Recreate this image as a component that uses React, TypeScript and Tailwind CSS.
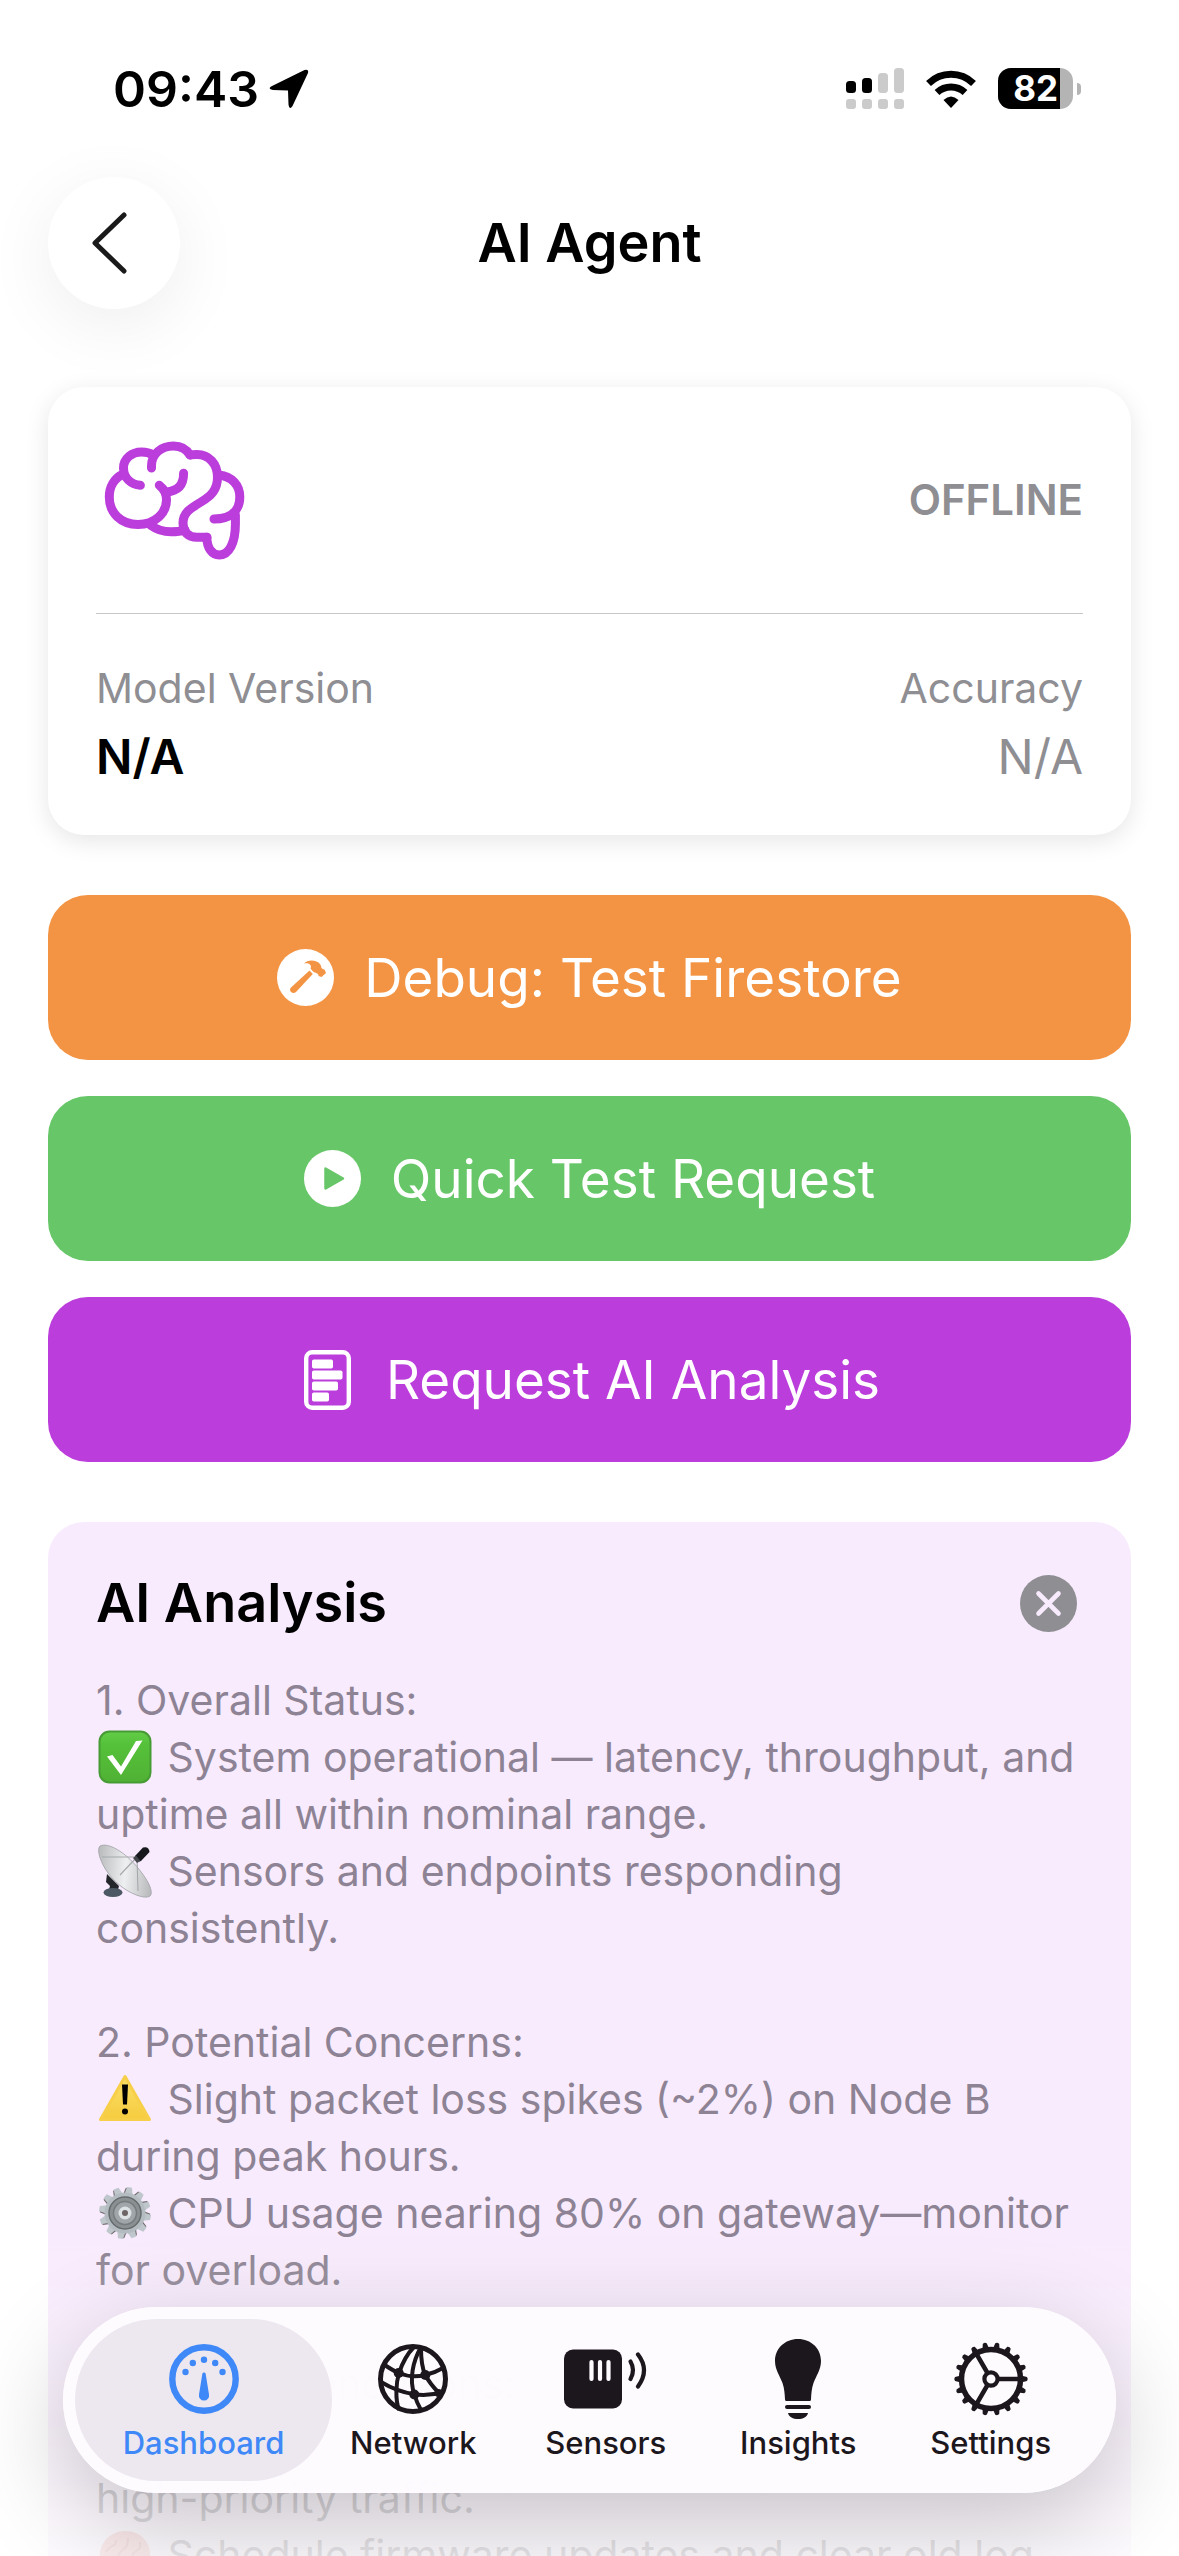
import { useState, type ReactNode } from 'react'
import clsx from 'clsx'

function BrainIcon() {
  return (
    <svg width="144" height="124" viewBox="0 -2 144 124" fill="none" stroke="#bb3ddb" strokeWidth="9" strokeLinecap="round" strokeLinejoin="round" aria-hidden="true">
      <path d="M21.6 34C12 38 7.3 47 7.3 57C7.3 73 19 84.5 36 84.5C53 84.5 64.5 73 64.5 60C64.5 53 62 49 57.3 45.3" />
      <path d="M38.4 45.3C29 44.5 21.5 38 21.5 28C21.5 18.5 30 12 39.5 12C44 12 48 13 51 15" />
      <path d="M49.5 28V26C49.5 14 59 6 71.5 6C79 6 84.5 9 88 15" />
      <path d="M81.6 33.3C81.6 45 76 51 64.5 52" />
      <path d="M88 15C90 14.5 92 14.5 95 14.5C107 14.5 115.5 24 115.5 37C115.5 50 109 56 99 62C88 68.5 81 73 81 83C81 92 86 97.3 95 97.3H105" />
      <path d="M49 85.5C55 90 62 91.8 69 91.8C74 91.8 79 91.3 83 90" />
      <path d="M117 35C130 36.5 137.8 45 137.8 57C137.8 71 128 79 112 79" />
      <path d="M133.4 75V84C133.4 103 127 115 117.3 115C110 115 105 108 104.8 97.3" />
    </svg>
  )
}

function HammerIcon() {
  return (
    <svg width="57" height="57" viewBox="0 0 57 57" aria-hidden="true">
      <circle cx="28.5" cy="28.5" r="28.5" fill="#fff" />
      <g fill="#f39444">
        <path d="M32.5 21.5L35.8 25L19 43Q16.5 45 14 43Q12 40.5 14 38.5Z" />
        <path d="M27 14.5C31 10 40 11 43 15C45 18 43.5 20 47.5 20.5L49 24L44.5 28L41.5 27C42 24 38 24 36 22.5L33.5 19.5C35.5 15.5 31 13.5 27 14.5Z" />
      </g>
    </svg>
  )
}

function PlayIcon() {
  return (
    <svg width="57" height="57" viewBox="0 0 57 57" aria-hidden="true">
      <circle cx="28.5" cy="28.5" r="28.5" fill="#fff" />
      <path d="M21.5 18.5L39 28.5L21.5 38.5Z" fill="#67c668" stroke="#67c668" strokeWidth="2.5" strokeLinejoin="round" />
    </svg>
  )
}

function ReportIcon() {
  return (
    <svg width="57" height="60" viewBox="0 0 57 60" fill="#fff" aria-hidden="true">
      <rect x="7.2" y="2.2" width="42.6" height="55.6" rx="6" fill="none" stroke="#fff" strokeWidth="4.4" />
      <rect x="13" y="9.5" width="21" height="9" rx="1.8" />
      <rect x="13" y="20.5" width="30.5" height="9" rx="1.8" />
      <rect x="13" y="31.5" width="26" height="9" rx="1.8" />
      <rect x="13" y="42.5" width="17" height="9" rx="1.8" />
    </svg>
  )
}

function GaugeIcon() {
  return (
    <svg width="72" height="72" viewBox="-36 -36 72 72" fill="currentColor" aria-hidden="true">
      <circle r="31.7" fill="none" stroke="currentColor" strokeWidth="6.4" />
      <circle cx="-18.5" cy="-7" r="3.2" />
      <circle cx="-11.2" cy="-16" r="3.2" />
      <circle cx="0" cy="-19.3" r="3.2" />
      <circle cx="11.2" cy="-16" r="3.2" />
      <circle cx="18.5" cy="-7" r="3.2" />
      <path d="M-1.7 -5C-1.5 -7 1.5 -7 1.7 -5L5 15.5A5.1 5.1 0 1 1 -5 15.5Z" />
    </svg>
  )
}

function GlobeIcon() {
  return (
    <svg width="72" height="72" viewBox="-36 -36 72 72" fill="none" stroke="currentColor" strokeWidth="4" aria-hidden="true">
      <circle r="32.5" strokeWidth="5" />
      <path d="M-29 -14.5C-24 -11 -19 -8 -14 -6C-5 -2 4 -2 12.3 -4C19 -5.5 25 -8 31 -11.5" />
      <path d="M1 -32C-6 -25 -11 -15 -14 -6C-17 4 -18 20 -14 31" />
      <path d="M8 -32C0 -18 -4 0 1.3 15.3C3 21 5 26 8 31" />
      <path d="M8 -31C8 -20 9 -11 12.3 -4C16 3 21 9 26 14" />
      <path d="M-32 3C-22 9 -10 13.5 1.3 15.3C10 16.5 20 16 30 13" />
      <g fill="currentColor" stroke="none">
        <circle cx="-14.3" cy="-6" r="5" />
        <circle cx="12.3" cy="-4" r="5" />
        <circle cx="1.3" cy="15.5" r="5" />
        <circle cx="25.5" cy="14" r="4" />
      </g>
    </svg>
  )
}

function SensorIcon() {
  return (
    <svg width="84" height="60" viewBox="0 0 84 60" fill="none" stroke="currentColor" strokeLinecap="round" aria-hidden="true">
      <rect x="0" y="0.5" width="58" height="59" rx="9" fill="currentColor" stroke="none" />
      <path d="M27.5 13V30M36 13V30M44.5 13V30" stroke="#fefbff" strokeWidth="4.2" />
      <path d="M66.5 12.5Q71.5 21 66.5 30" strokeWidth="4.2" />
      <path d="M74 5.5Q86 21 74 37.5" strokeWidth="4.2" />
    </svg>
  )
}

function BulbIcon() {
  return (
    <svg width="46" height="80" viewBox="0 0 46 80" fill="currentColor" aria-hidden="true">
      <path d="M23 0C36 0 46 9.5 46 22C46 31 41 37 38.5 44C36.5 50 36.3 55 36 60.5Q36 62 34.5 62H11.5Q10 62 10 60.5C9.7 55 9.5 50 7.5 44C5 37 0 31 0 22C0 9.5 10 0 23 0Z" />
      <rect x="10" y="66" width="26" height="4" rx="2" />
      <path d="M13 74H33C32 78 28 80 23 80C18 80 14 78 13 74Z" />
    </svg>
  )
}

const teeth = Array.from({ length: 18 }, (_, i) => i * 20)

function CogIcon() {
  return (
    <svg width="76" height="76" viewBox="-38 -38 76 76" fill="none" stroke="currentColor" aria-hidden="true">
      <circle r="29.5" strokeWidth="5.5" />
      <circle r="6.6" strokeWidth="4.2" />
      {teeth.map((a) => (
        <path key={a} d="M30 -3.4L36 -2Q37.5 0 36 2L30 3.4Z" fill="currentColor" stroke="none" transform={`rotate(${a})`} />
      ))}
      <path d="M8 0H28M-4 -6.9L-14 -24.2M-4 6.9L-14 24.2" strokeWidth="4.6" />
    </svg>
  )
}

// Inline pictographs sit on the text line and wrap with it.
function Glyph({ label, children }: { label: string; children: ReactNode }) {
  return (
    <svg role="img" aria-label={label} viewBox="0 0 54 54" className="-mt-2 mr-1 ml-0.5 inline-block h-[54px] w-[54px] align-middle">
      {children}
    </svg>
  )
}

function CheckGlyph() {
  return (
    <Glyph label="Check">
      <defs>
        <linearGradient id="check-fill" x1="0" y1="0" x2="0" y2="1">
          <stop offset="0" stopColor="#63cc48" />
          <stop offset="0.25" stopColor="#55c13a" />
          <stop offset="1" stopColor="#50b134" />
        </linearGradient>
      </defs>
      <rect x="1.5" y="1.5" width="51" height="51" rx="10" fill="url(#check-fill)" stroke="#479b35" strokeWidth="2" />
      <path d="M9 26.5L14.5 25L23 36.5L38 11L44.5 10.5L23 45Z" fill="#fff" />
    </Glyph>
  )
}

function DishGlyph() {
  return (
    <Glyph label="Satellite dish">
      <defs>
        <linearGradient id="dish-fill" x1="0" y1="0.5" x2="1" y2="0.6">
          <stop offset="0" stopColor="#bcbec0" />
          <stop offset="0.5" stopColor="#eeeff0" />
          <stop offset="1" stopColor="#b9bbbd" />
        </linearGradient>
      </defs>
      <path d="M9 30L21 42L19 49H10L12 42L8 38Z" fill="#23262a" />
      <ellipse cx="15" cy="48.5" rx="9.5" ry="4.5" fill="#4c5964" />
      <path d="M2 2C10 -2 27 8 40 24C50 36 56 48 52 52C47 56 28 49 15 35C3 22 -2 6 2 2Z" fill="url(#dish-fill)" stroke="#9da0a3" strokeWidth="0.8" />
      <path d="M4 13L39 13L40 47M39 13L22 31" fill="none" stroke="#a6a9ac" strokeWidth="1.1" />
      <path d="M37 12L45 3.5Q51 2 51.5 8L43 17Q38 19 37 12Z" fill="#17191c" />
      <path d="M35 14L38 11.5L42.5 17L39 19Z" fill="#44484d" />
    </Glyph>
  )
}

function WarningGlyph() {
  return (
    <Glyph label="Warning">
      <defs>
        <linearGradient id="warn-fill" x1="0" y1="0" x2="0" y2="1">
          <stop offset="0" stopColor="#fbe06a" />
          <stop offset="1" stopColor="#f6cb3e" />
        </linearGradient>
      </defs>
      <path d="M27 4.5L51.5 47.5H2.5Z" fill="url(#warn-fill)" stroke="#f7cf49" strokeWidth="3" strokeLinejoin="round" />
      <path d="M24 12.5H30L29 32.5H25Z" fill="#000" />
      <circle cx="27" cy="39.5" r="3" fill="#000" />
    </Glyph>
  )
}

const cogTeeth = Array.from({ length: 12 }, (_, i) => i * 30 + 10)

function GearGlyph() {
  return (
    <Glyph label="Gear">
      <g transform="translate(27 27)">
        {cogTeeth.map((a) => (
          <g key={a} transform={`rotate(${a})`}>
            <path d="M16 -5.5L25 -3.6V1L16 4Z" fill="#6f6a6b" />
            <path d="M17 -4L26 -2.5V2.5L17 5Z" fill="#bfc7cc" />
          </g>
        ))}
        <circle r="20.5" fill="#b4bcc1" />
        <circle r="16" fill="#8b9093" stroke="#666b6e" strokeWidth="1.5" />
        <circle r="11.5" fill="#9fa5a8" stroke="#767b7e" strokeWidth="1.5" />
        <circle r="6.5" fill="#dde2e5" />
        <circle r="3" fill="#6c6465" />
      </g>
    </Glyph>
  )
}

function BrainGlyph() {
  return (
    <Glyph label="Brain">
      <path d="M2 30C0 18 10 4 26 3C40 2 52 12 52 26C52 38 44 46 30 44C16 48 4 42 2 30Z" fill="#eba6ae" />
      <path d="M8 24C12 16 18 20 18 12M20 28C24 18 30 24 30 10M34 30C34 20 44 26 42 14M10 34C18 28 26 38 34 34" fill="none" stroke="#cf7f8b" strokeWidth="2" />
    </Glyph>
  )
}

function StatusBar() {
  return (
    <div className="flex h-[177px] shrink-0 items-center justify-between pr-[98px] pl-[113px]">
      <div className="flex items-center gap-2.5">
        <span className="text-[50px] leading-[60px] font-semibold">09:43</span>
        <svg width="40" height="40" viewBox="0 0 40 40" aria-hidden="true">
          <path d="M2 17.5L35.5 1Q40 -0.5 39 4L23.5 37Q20.5 41.5 19.5 35.5L19 21.5L4 21Q-1.5 20 2 17.5Z" />
        </svg>
      </div>
      <div className="flex items-center gap-[22px]">
        <svg width="58" height="41" viewBox="0 0 58 41" fill="#cbcbcb" aria-label="Signal">
          <rect x="0" y="13" width="10" height="12" rx="3.5" fill="#000" />
          <rect x="16" y="10" width="10" height="15" rx="3.5" fill="#000" />
          <rect x="32" y="5" width="10" height="20" rx="3.5" />
          <rect x="48" y="0" width="10" height="25" rx="3.5" />
          <rect x="0" y="31" width="10" height="10" rx="3" />
          <rect x="16" y="31" width="10" height="10" rx="3" />
          <rect x="32" y="31" width="10" height="10" rx="3" />
          <rect x="48" y="31" width="10" height="10" rx="3" />
        </svg>
        <svg width="50" height="38" viewBox="0 0 50 38" fill="none" stroke="#000" strokeWidth="7" aria-label="Wi-Fi">
          <path d="M2.5 13.5Q12 4.3 25 4.3Q38 4.3 47.5 13.5" />
          <path d="M11 22.5Q17 17 25 17Q33 17 39 22.5" />
          <path d="M17.5 30Q25 23 32.5 30L25 38Z" fill="#000" stroke="none" />
        </svg>
        <div className="flex items-center gap-1">
          <div className="flex h-[41px] w-[75px] overflow-hidden rounded-[13px] bg-[#b4b4b4]">
            <div className="flex w-[62px] items-center justify-end bg-black pr-0.5 text-[35px] leading-[41px] font-bold text-white">82</div>
          </div>
          <div className="h-3 w-1 rounded-r-full bg-[#b4b4b4]" />
        </div>
      </div>
    </div>
  )
}

function StatusCard() {
  return (
    <section className="rounded-[36px] bg-white p-12 shadow-[0_6px_24px_rgba(0,0,0,0.1)]">
      <div className="flex h-[130px] items-center justify-between pl-1.5">
        <BrainIcon />
        <span className="text-[42px] leading-[54px] font-semibold text-[#8e8e93]">OFFLINE</span>
      </div>
      <hr className="mt-12 border-t border-[#c6c6c8]" />
      <dl className="mt-[47px] flex justify-between">
        <div className="flex flex-col gap-3">
          <dt className="text-[41px] leading-[54px] text-[#8e8e93]">Model Version</dt>
          <dd className="text-[48px] leading-[60px] font-semibold">N/A</dd>
        </div>
        <div className="flex flex-col gap-3 text-right">
          <dt className="text-[41px] leading-[54px] text-[#8e8e93]">Accuracy</dt>
          <dd className="text-[48px] leading-[60px] text-[#8e8e93]">N/A</dd>
        </div>
      </dl>
    </section>
  )
}

function ActionButton({ className, icon, children }: { className: string; icon: ReactNode; children: ReactNode }) {
  return (
    <button type="button" className={clsx('flex h-[165px] w-full items-center justify-center gap-[30px] rounded-[40px] text-[53px] leading-[66px] text-white', className)}>
      {icon}
      {children}
    </button>
  )
}

function AnalysisCard({ onClose }: { onClose: () => void }) {
  return (
    <section className="rounded-[36px] bg-[#f8ebfd] p-12">
      <div className="flex h-[66px] items-center justify-between">
        <h2 className="text-[54px] leading-[66px] font-semibold">AI Analysis</h2>
        <button type="button" aria-label="Close" onClick={onClose} className="mr-1.5">
          <svg width="57" height="57" viewBox="0 0 57 57" aria-hidden="true">
            <circle cx="28.5" cy="28.5" r="28.5" fill="#8e8e93" />
            <path d="M18.5 18.5L38.5 38.5M38.5 18.5L18.5 38.5" stroke="#f8ebfd" strokeWidth="4.6" strokeLinecap="round" />
          </svg>
        </button>
      </div>
      <div className="mt-9 text-[41px] leading-[57px] text-[#8d8394]">
        <p>1. Overall Status:</p>
        <p><CheckGlyph /> System operational — latency, throughput, and uptime all within nominal range.</p>
        <p><DishGlyph /> Sensors and endpoints responding consistently.</p>
        <p className="mt-[57px]">2. Potential Concerns:</p>
        <p><WarningGlyph /> Slight packet loss spikes (~2%) on Node B during peak hours.</p>
        <p><GearGlyph /> CPU usage nearing 80% on gateway—monitor for overload.</p>
        <p className="mt-[57px]">3. Recommendations:</p>
        <p className="mt-[57px]">high-priority traffic.</p>
        <p><BrainGlyph /> Schedule firmware updates and clear old log</p>
      </div>
    </section>
  )
}

const tabs = [
  { name: 'Dashboard', icon: <GaugeIcon /> },
  { name: 'Network', icon: <GlobeIcon /> },
  { name: 'Sensors', icon: <SensorIcon /> },
  { name: 'Insights', icon: <BulbIcon /> },
  { name: 'Settings', icon: <CogIcon /> },
]

function TabBar() {
  const [active, setActive] = useState('Dashboard')

  return (
    <nav className="absolute inset-x-[63px] bottom-[63px] flex rounded-full bg-[#fefbff]/98 py-3 pr-[29px] pl-3 shadow-[0_30px_100px_rgba(0,0,0,0.22)]">
      {tabs.map((tab) => (
        <button
          key={tab.name}
          type="button"
          onClick={() => setActive(tab.name)}
          className={clsx(
            'flex h-[162px] flex-col items-center justify-center gap-1.5 rounded-full text-[31px] leading-9 font-medium',
            tab.name === active ? '-mr-[15px] w-[257px] bg-[#ede8f0] text-[#3f88f7]' : 'flex-1 text-[#1c161d]',
          )}
        >
          <span className="flex h-20 items-center">{tab.icon}</span>
          {tab.name}
        </button>
      ))}
    </nav>
  )
}

export default function App() {
  const [showAnalysis, setShowAnalysis] = useState(true)

  return (
    <div className="relative flex h-screen flex-col overflow-hidden bg-white font-[Inter,'Liberation_Sans',sans-serif] text-black">
      <StatusBar />
      <header className="grid shrink-0 grid-cols-[132px_1fr_132px] items-center px-12">
        <button type="button" aria-label="Back" className="flex h-[132px] items-center justify-center rounded-full bg-white shadow-[0_16px_70px_rgba(0,0,0,0.07)]">
          <svg width="62" height="64" viewBox="0 0 62 64" fill="none" stroke="#1a1a1a" strokeWidth="5" strokeLinecap="round" strokeLinejoin="round" aria-hidden="true">
            <path d="M41 4L12 32L41 60" />
          </svg>
        </button>
        <h1 className="text-center text-[54px] leading-[66px] font-semibold">AI Agent</h1>
      </header>
      <main className="mt-[78px] flex flex-col px-12">
        <StatusCard />
        <div className="mt-[60px] flex flex-col gap-9">
          <ActionButton className="bg-[#f39444]" icon={<HammerIcon />}>Debug: Test Firestore</ActionButton>
          <ActionButton className="bg-[#67c668]" icon={<PlayIcon />}>Quick Test Request</ActionButton>
          <ActionButton className="bg-[#bb3ddb]" icon={<ReportIcon />}>Request AI Analysis</ActionButton>
        </div>
        {showAnalysis && (
          <div className="mt-[60px]">
            <AnalysisCard onClose={() => setShowAnalysis(false)} />
          </div>
        )}
      </main>
      <div className="pointer-events-none absolute inset-x-0 bottom-0 h-80 bg-linear-to-b from-white/0 to-white/80" />
      <TabBar />
    </div>
  )
}
